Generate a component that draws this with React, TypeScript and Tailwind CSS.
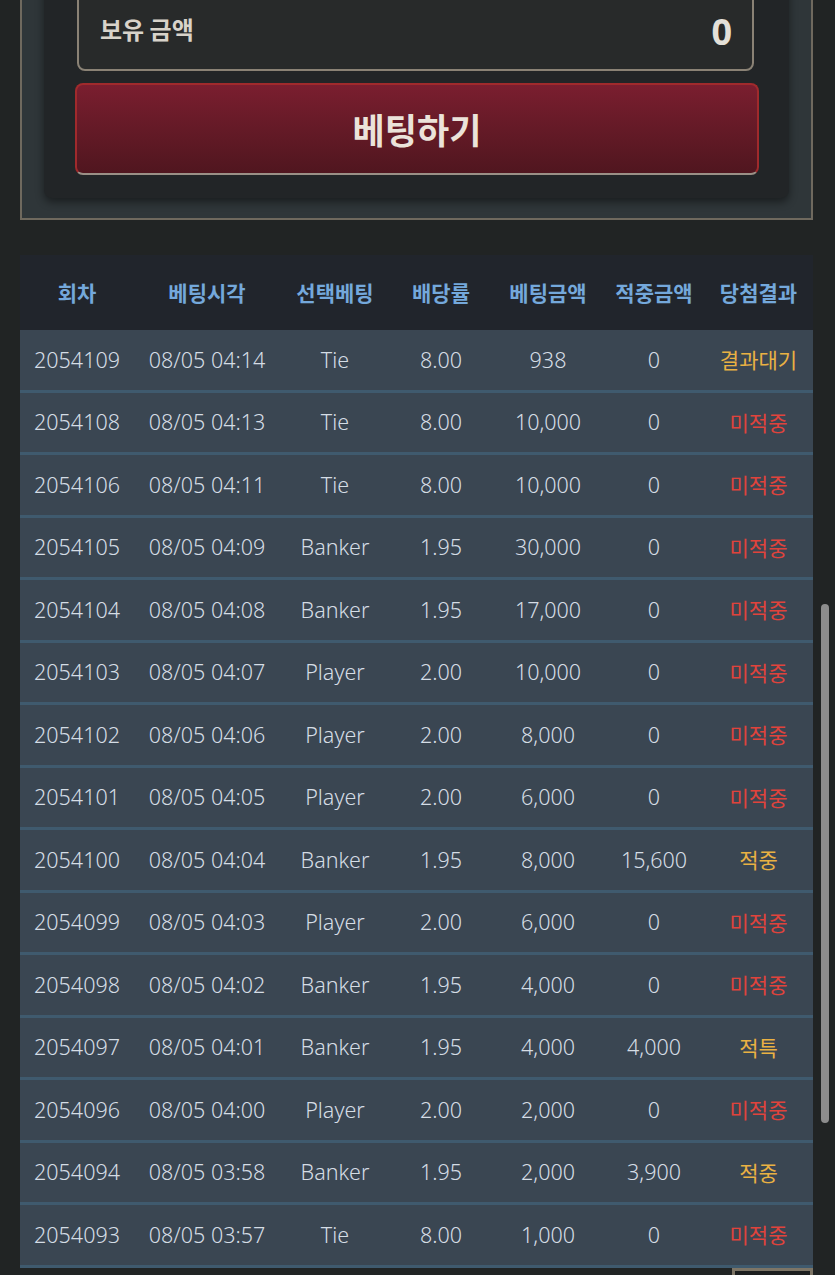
import React from "react";

type Row = {
  round: string;
  time: string;
  pick: string;
  odds: string;
  bet: string;
  win: string;
  result: string;
};

const rows: Row[] = [
  { round: "2054109", time: "08/05 04:14", pick: "Tie", odds: "8.00", bet: "938", win: "0", result: "결과대기" },
  { round: "2054108", time: "08/05 04:13", pick: "Tie", odds: "8.00", bet: "10,000", win: "0", result: "미적중" },
  { round: "2054106", time: "08/05 04:11", pick: "Tie", odds: "8.00", bet: "10,000", win: "0", result: "미적중" },
  { round: "2054105", time: "08/05 04:09", pick: "Banker", odds: "1.95", bet: "30,000", win: "0", result: "미적중" },
  { round: "2054104", time: "08/05 04:08", pick: "Banker", odds: "1.95", bet: "17,000", win: "0", result: "미적중" },
  { round: "2054103", time: "08/05 04:07", pick: "Player", odds: "2.00", bet: "10,000", win: "0", result: "미적중" },
  { round: "2054102", time: "08/05 04:06", pick: "Player", odds: "2.00", bet: "8,000", win: "0", result: "미적중" },
  { round: "2054101", time: "08/05 04:05", pick: "Player", odds: "2.00", bet: "6,000", win: "0", result: "미적중" },
  { round: "2054100", time: "08/05 04:04", pick: "Banker", odds: "1.95", bet: "8,000", win: "15,600", result: "적중" },
  { round: "2054099", time: "08/05 04:03", pick: "Player", odds: "2.00", bet: "6,000", win: "0", result: "미적중" },
  { round: "2054098", time: "08/05 04:02", pick: "Banker", odds: "1.95", bet: "4,000", win: "0", result: "미적중" },
  { round: "2054097", time: "08/05 04:01", pick: "Banker", odds: "1.95", bet: "4,000", win: "4,000", result: "적특" },
  { round: "2054096", time: "08/05 04:00", pick: "Player", odds: "2.00", bet: "2,000", win: "0", result: "미적중" },
  { round: "2054094", time: "08/05 03:58", pick: "Banker", odds: "1.95", bet: "2,000", win: "3,900", result: "적중" },
  { round: "2054093", time: "08/05 03:57", pick: "Tie", odds: "8.00", bet: "1,000", win: "0", result: "미적중" },
];

const headers = ["회차", "베팅시각", "선택베팅", "배당률", "베팅금액", "적중금액", "당첨결과"];

const cols = "grid grid-cols-[114px_146px_110px_102px_112px_100px_1fr]";

const resultColor = (r: string) =>
  r === "미적중" ? "text-[#e0433c]" : "text-[#e9b143]";

const kr = { fontFamily: '"Noto Sans CJK KR", sans-serif' };

export default function App() {
  return (
    <div
      className="relative min-h-[1275px] overflow-hidden bg-[#212424]"
      style={{ fontFamily: '"Noto Sans", "Noto Sans CJK KR", sans-serif' }}
    >
      {/* Bet panel */}
      <div className="mx-[20px] w-[793px] border-x-2 border-b-2 border-[#6f695e] bg-[#2f3639] px-[22px] pb-[20px]">
        <div className="rounded-b-lg bg-[#222527] pl-[31px] pr-[30px] pb-[23px] shadow-[0_4px_8px_rgba(0,0,0,0.45)]">
          <div className="-mt-[20px] ml-[2px] mr-[5px] flex h-[91px] items-center justify-between rounded-lg border-2 border-[#8a8275] bg-[#282a2a] pl-[21px] pr-[20px] pt-[6px]">
            <span className="text-[24px] font-bold text-[#d8d3ca]" style={kr}>
              보유 금액
            </span>
            <span className="pt-[6px] text-[36px] font-bold text-[#e4e0d8]">0</span>
          </div>
          <button
            className="mt-[12px] flex h-[92px] w-full items-center justify-center rounded-lg border-2 border-[#a02a2c] border-b-[#9a9086] bg-gradient-to-b from-[#7a1e2f] to-[#50161f] text-[35px] font-bold text-[#ebe3da]"
            style={kr}
          >
            베팅하기
          </button>
        </div>
      </div>

      {/* History table */}
      <div className="mx-[20px] mt-[35px] w-[793px]">
        <div className={`${cols} h-[75px] items-center bg-[#21252c]`}>
          {headers.map((h) => (
            <div key={h} className="text-center text-[21px] font-bold text-[#74a8db]" style={kr}>
              {h}
            </div>
          ))}
        </div>
        {rows.map((r) => (
          <div
            key={r.round}
            className={`${cols} h-[62.5px] items-center border-b-[3px] border-[#3f5a6e] bg-[#3a4652] text-[21.5px] font-light text-[#d5dde5]`}
          >
            <div className="text-center">{r.round}</div>
            <div className="text-center">{r.time}</div>
            <div className="text-center">{r.pick}</div>
            <div className="text-center">{r.odds}</div>
            <div className="text-center">{r.bet}</div>
            <div className="text-center">{r.win}</div>
            <div className={`text-center text-[21px] font-normal ${resultColor(r.result)}`} style={kr}>
              {r.result}
            </div>
          </div>
        ))}
        <div className="flex justify-end">
          <div className="h-[20px] w-[81px] border-x-[3px] border-t-[3px] border-[#7d7566] bg-[#1d1f1f]" />
        </div>
      </div>

      {/* Scrollbar thumb */}
      <div className="absolute left-[821px] top-[604px] h-[519px] w-[8px] rounded-full bg-[#8d8d8d]" />
    </div>
  );
}
